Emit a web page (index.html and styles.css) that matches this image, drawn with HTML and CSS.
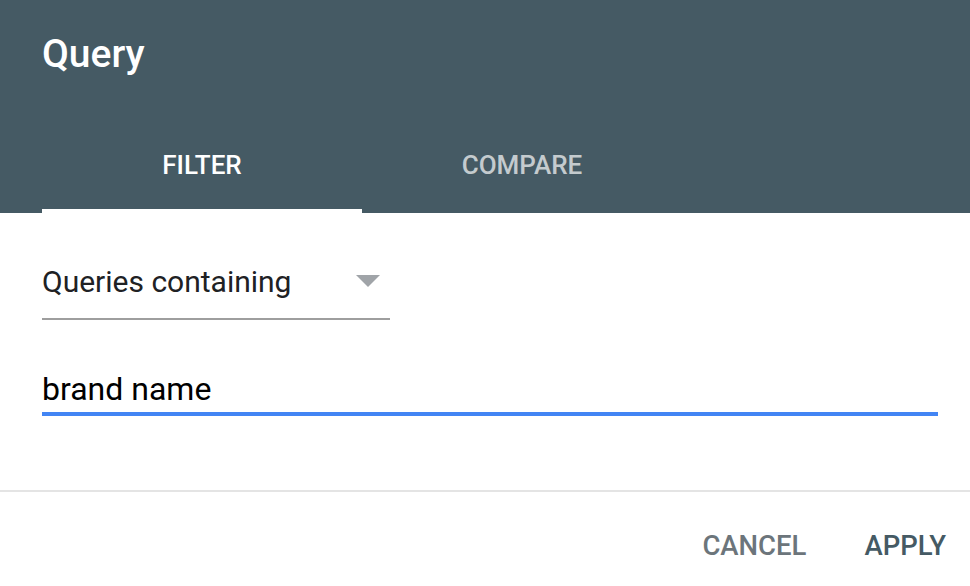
FILE: index.html
```html
<!DOCTYPE html>
<html lang="en">
<head>
<meta charset="utf-8">
<title>Query</title>
<link rel="stylesheet" href="styles.css">
</head>
<body>
<div class="dialog">
  <header class="header">
    <h1 class="title">Query</h1>
    <nav class="tabs">
      <div class="tab tab-active">FILTER</div>
      <div class="tab">COMPARE</div>
    </nav>
  </header>
  <main class="content">
    <div class="select">
      <span class="select-label">Queries containing</span>
      <span class="select-arrow"></span>
    </div>
    <div class="input">brand name</div>
  </main>
  <footer class="footer">
    <button class="btn btn-cancel">CANCEL</button>
    <button class="btn btn-apply">APPLY</button>
  </footer>
</div>
</body>
</html>
```
FILE: styles.css
```css
* { box-sizing: border-box; }
html, body { margin: 0; padding: 0; background: #fff; }
body { font-family: Roboto, "Liberation Sans", Arial, sans-serif; width: 970px; height: 586px; overflow: hidden; }

.header {
  background: #455a64;
  height: 213px;
  padding: 34px 0 0 42px;
  display: flex;
  flex-direction: column;
}
.title {
  margin: 0 0 43px 0;
  font-size: 39px;
  line-height: 40px;
  font-weight: 500;
  color: #fff;
}
.tabs { display: flex; height: 96px; }
.tab {
  width: 320px;
  display: flex;
  align-items: center;
  justify-content: center;
  font-size: 26px;
  font-weight: 500;
  color: rgba(255,255,255,0.7);
  border-bottom: 4px solid transparent;
  padding-top: 4px;
}
.tab-active { color: #fff; border-bottom-color: #fff; }

.content { padding: 31px 32px 0 42px; }
.select {
  width: 348px;
  height: 76px;
  display: flex;
  align-items: center;
  justify-content: space-between;
  border-bottom: 2px solid #9e9e9e;
  padding-right: 10px;
}
.select-label { font-size: 30px; color: #202124; }
.select-arrow {
  width: 0; height: 0;
  border-left: 12px solid transparent;
  border-right: 12px solid transparent;
  border-top: 12px solid #a0a4a8;
}
.input {
  margin-top: 46px;
  height: 50px;
  display: flex;
  align-items: center;
  font-size: 32px;
  color: #000;
  border-bottom: 4px solid #4285f4;
}

.footer {
  margin-top: 74px;
  border-top: 2px solid #e4e4e4;
  height: 96px;
  padding: 12px 24px 0 0;
  display: flex;
  align-items: center;
  justify-content: flex-end;
  gap: 58px;
}
.btn {
  border: 0;
  background: none;
  padding: 0;
  font-family: inherit;
  font-size: 27.5px;
  font-weight: 500;
}
.btn-cancel { color: #6c757b; }
.btn-apply { color: #455a64; }
```
